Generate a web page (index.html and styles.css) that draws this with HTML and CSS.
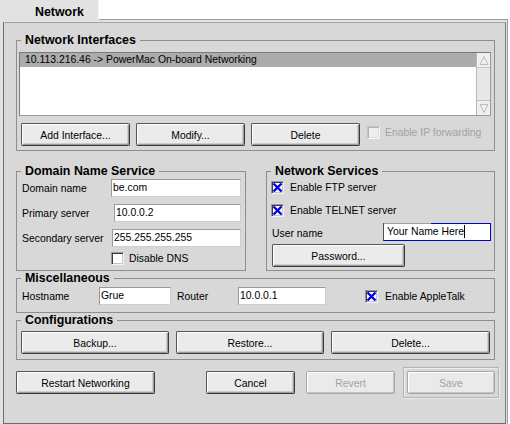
FILE: index.html
```html
<!DOCTYPE html>
<html>
<head>
<meta charset="utf-8">
<link rel="stylesheet" href="styles.css">
</head>
<body>
<div class="win">
  <div class="tabrow">
    <div class="tab">Network</div>
    <div class="tabrest"></div>
  </div>
  <div class="panel">
    <div class="inner">

      <fieldset class="box ni">
        <legend>Network Interfaces</legend>
        <div class="body ni-body">
          <div class="list">
            <div class="list-body">
              <div class="row sel">10.113.216.46 -&gt; PowerMac On-board Networking</div>
            </div>
            <div class="vscroll">
              <span class="arrow"><svg width="12" height="13" viewBox="0 0 12 13"><path d="M6 2.5 L10 10.5 H2 Z" fill="none" stroke="#bdbdbd"/></svg></span>
              <span class="arrow"><svg width="12" height="13" viewBox="0 0 12 13"><path d="M6 10.5 L10 2.5 H2 Z" fill="none" stroke="#bdbdbd"/></svg></span>
            </div>
          </div>
          <div class="btnrow">
            <div class="btn w109">Add Interface...</div>
            <div class="btn w109">Modify...</div>
            <div class="btn w109">Delete</div>
            <div class="check dis ipf"><span class="cb dis"></span><span class="ctext">Enable IP forwarding</span></div>
          </div>
        </div>
      </fieldset>

      <div class="pair">
        <fieldset class="box dns">
          <legend>Domain Name Service</legend>
          <div class="body dns-body">
            <div class="frow first"><span class="lbl">Domain name</span><div class="field f-domain">be.com</div></div>
            <div class="frow"><span class="lbl">Primary server</span><div class="field f-primary">10.0.0.2</div></div>
            <div class="frow"><span class="lbl">Secondary server</span><div class="field f-secondary">255.255.255.255</div></div>
            <div class="check dnscheck"><span class="cb"></span><span class="ctext">Disable DNS</span></div>
          </div>
        </fieldset>

        <fieldset class="box svc">
          <legend>Network Services</legend>
          <div class="body svc-body">
            <div class="check ftp"><span class="cb"><svg width="11" height="11" viewBox="0 0 11 11"><path d="M1.5 1.5 L9.5 9.5 M9.5 1.5 L1.5 9.5" stroke="#0000f0" stroke-width="2.4"/></svg></span><span class="ctext">Enable FTP server</span></div>
            <div class="check telnet"><span class="cb"><svg width="11" height="11" viewBox="0 0 11 11"><path d="M1.5 1.5 L9.5 9.5 M9.5 1.5 L1.5 9.5" stroke="#0000f0" stroke-width="2.4"/></svg></span><span class="ctext">Enable TELNET server</span></div>
            <div class="frow user"><span class="lbl">User name</span><div class="field focus f-user">Your Name Here<span class="caret"></span></div></div>
            <div class="btn pw">Password...</div>
          </div>
        </fieldset>
      </div>

      <fieldset class="box misc">
        <legend>Miscellaneous</legend>
        <div class="body misc-body">
          <span class="lbl l-host">Hostname</span>
          <div class="field f-host">Grue</div>
          <span class="lbl l-router">Router</span>
          <div class="field f-router">10.0.0.1</div>
          <div class="check atalk"><span class="cb"><svg width="11" height="11" viewBox="0 0 11 11"><path d="M1.5 1.5 L9.5 9.5 M9.5 1.5 L1.5 9.5" stroke="#0000f0" stroke-width="2.4"/></svg></span><span class="ctext">Enable AppleTalk</span></div>
        </div>
      </fieldset>

      <fieldset class="box conf">
        <legend>Configurations</legend>
        <div class="body conf-body">
          <div class="btn w148">Backup...</div>
          <div class="btn w148">Restore...</div>
          <div class="btn w159">Delete...</div>
        </div>
      </fieldset>

      <div class="bottom">
        <div class="btn restart">Restart Networking</div>
        <div class="btn cancel">Cancel</div>
        <div class="btn disabled revert">Revert</div>
        <div class="defframe"><div class="btn disabled save">Save</div></div>
      </div>

    </div>
  </div>
</div>
</body>
</html>
```

FILE: styles.css
```css
* { box-sizing: border-box; }
html, body { margin: 0; padding: 0; background: #fff; }
body {
  font-family: "Liberation Sans", Arial, sans-serif;
  font-size: 10.4px;
  color: #000;
}
.win {
  width: 510px;
  height: 424px;
  display: flex;
  flex-direction: column;
  overflow: hidden;
}
.tabrow { display: flex; height: 20px; flex: none; }
.tab {
  width: 99px;
  height: 20px;
  background: #e2e2e2;
  border-right: 1px solid #f2f2f2;
  padding-left: 35px;
  padding-top: 2px;
  line-height: 20px;
  font-weight: bold;
  font-size: 12.4px;
  white-space: nowrap;
}
.tabrest {
  flex: 1;
  margin-right: 2px;
  border-bottom: 1px solid #9c9c9c;
}
.panel {
  flex: 1;
  display: flex;
  margin-right: 2px;
  background: #e2e2e2;
  border-right: 1px solid #9c9c9c;
  padding: 2px 1px 0 3px;
}
.inner {
  flex: 1;
  background: #d8d8d8;
  border: 1px solid;
  border-color: #a4a4a4 #7a7a7a #6a6a6a #6a6a6a;
  padding: 10px 10px 0 12px;
}
fieldset.box {
  margin: 0;
  padding: 0;
  border: 1px solid #8e8e8e;
  min-width: 0;
}
legend {
  padding: 0 4px;
  margin-left: 4px;
  font-weight: bold;
  font-size: 12.4px;
  line-height: 14px;
  white-space: nowrap;
}

/* Network interfaces */
.ni-body { padding: 5px 3px 4px 2px; }
.list {
  height: 64px;
  display: flex;
  background: #fff;
  border: 1px solid;
  border-color: #7a7a7a #9a9a9a #9a9a9a #7a7a7a;
}
.list-body { flex: 1; }
.row {
  height: 14px;
  line-height: 14px;
  padding-left: 5px;
  white-space: nowrap;
}
.row.sel { background: #acacac; }
.vscroll {
  width: 14px;
  flex: none;
  background: #e8e8e8;
  border-left: 1px solid #b8b8b8;
  display: flex;
  flex-direction: column;
  justify-content: space-between;
}
.arrow {
  height: 15px;
  display: flex;
  align-items: center;
  justify-content: center;
  background: #efefef;
  border-top: 1px solid #fafafa;
  border-bottom: 1px solid #c4c4c4;
}
.arrow:first-child { border-top: none; }
.arrow:last-child { border-bottom: none; border-top: 1px solid #c4c4c4; }
.btnrow {
  display: flex;
  align-items: flex-start;
  margin-top: 7px;
  padding-left: 2px;
  gap: 6px;
}

/* buttons */
.btn {
  flex: none;
  height: 23px;
  border: 1px solid #555;
  border-right-color: #3a3a3a;
  border-bottom-color: #3a3a3a;
  border-radius: 2px;
  background: #ebebeb;
  box-shadow: inset 1px 1px 0 #fff, inset -1px -1px 0 #9a9a9a, inset -2px -2px 0 #cdcdcd;
  text-align: center;
  padding-top: 2px;
  line-height: 20px;
  white-space: nowrap;
}
.btn.disabled {
  color: #a2a2a2;
  border-color: #a8a8a8;
  background: #eaeaea;
  box-shadow: inset 1px 1px 0 #fff, inset -1px -1px 0 #c4c4c4;
}
.w109 { width: 109px; }
.w148 { width: 148px; }
.w159 { width: 159px; }

/* checkboxes */
.check {
  display: flex;
  align-items: center;
  height: 13px;
  line-height: 13px;
  white-space: nowrap;
}
.cb {
  width: 13px;
  height: 13px;
  flex: none;
  background: #fff;
  border: 1px solid;
  border-color: #9a9a9a #f4f4f4 #f4f4f4 #9a9a9a;
  box-shadow: inset 1px 1px 0 #3c3c3c, inset -1px -1px 0 #c4c4c4;
  display: flex;
}
.cb svg { display: block; }
.cb.dis {
  background: #efefef;
  border-color: #c4c4c4 #f4f4f4 #f4f4f4 #c4c4c4;
  box-shadow: inset 1px 1px 0 #b4b4b4, inset -1px -1px 0 #dedede;
}
.ctext { margin-left: 6px; }
.check.dis .ctext { color: #a2a2a2; margin-left: 5px; }
.ipf { margin-top: 3px; margin-left: 1px; }

/* fields */
.frow {
  display: flex;
  align-items: center;
  height: 18px;
  line-height: 18px;
  margin-top: 7px;
  white-space: nowrap;
}
.frow.first { margin-top: 1px; }
.frow .lbl { flex: 1; padding-top: 1px; }
.field {
  flex: none;
  height: 18px;
  background: #fff;
  border: 1px solid;
  border-color: #9a9a9a #cfcfcf #cfcfcf #9a9a9a;
  padding: 0 1px;
  line-height: 16px;
  white-space: nowrap;
  overflow: hidden;
}
.field.focus {
  border-color: #0000cc #0000cc #0000cc #505050;
  border-top: none;
  padding-top: 1px;
  padding-left: 3px;
  background: linear-gradient(to right, #a0a0a0 47px, #0000cc 47px) top left / 100% 1px no-repeat, #fff;
}
.caret {
  display: inline-block;
  width: 1px;
  height: 13px;
  background: #000;
  vertical-align: -3px;
}
.f-domain { width: 130px; }
.f-primary { width: 127px; }
.f-secondary { width: 129px; }

/* DNS + services */
.pair {
  display: flex;
  gap: 20px;
  margin-top: 13px;
}
.dns { width: 230px; flex: none; }
.svc { flex: 1; }
.dns-body { padding: 0 4px 5px 5px; }
.dnscheck { margin-top: 5px; padding-left: 89px; }
.dnscheck .ctext { margin-left: 5px; }
.svc-body { padding: 0 3px 3px 4px; }
.ftp { margin-top: 3px; }
.telnet { margin-top: 10px; }
.user { margin-top: 6px; }
.user .lbl { margin-left: 1px; padding-top: 3px; }
.f-user { width: 108px; }
.pw { width: 133px; margin-top: 3px; margin-left: 1px; }

/* misc */
.misc { margin-top: 11px; }
.misc-body {
  display: flex;
  align-items: center;
  height: 27px;
  padding: 2px 0 7px 5px;
  line-height: 18px;
  white-space: nowrap;
}
.misc-body .lbl { padding-top: 1px; }
.l-host { width: 77px; flex: none; }
.f-host { width: 72px; }
.l-router { width: 61px; margin-left: 6px; flex: none; }
.f-router { width: 88px; }
.atalk { margin-left: 39px; }
.atalk .ctext { margin-left: 7px; }

/* configurations */
.conf { margin-top: 7px; }
.conf-body {
  display: flex;
  gap: 7px;
  padding: 4px 0 5px 4px;
}

/* bottom row */
.bottom {
  display: flex;
  align-items: center;
  margin-top: 7px;
  margin-right: -5px;
}
.restart { width: 139px; }
.cancel { width: 89px; margin-left: 51px; }
.revert { width: 89px; margin-left: 11px; }
.defframe {
  width: 96px;
  height: 31px;
  margin-left: 8px;
  padding: 3px;
  border: 1px solid #b4b4b4;
  box-shadow: inset 1px 1px 0 #ececec, 1px 1px 0 #ececec;
  background: #d8d8d8;
}
.save { width: 88px; }
```
